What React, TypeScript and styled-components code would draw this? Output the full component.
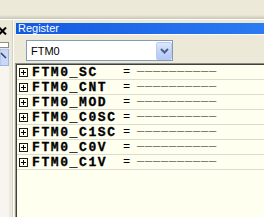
import React from "react";
import styled, {createGlobalStyle} from "styled-components";

const GlobalStyle = createGlobalStyle`
  html, body {
    margin: 0;
    padding: 0;
    background: #ECE9D8;
    overflow: hidden;
  }

  #root {
    width: 264px;
    height: 217px;
    overflow: hidden;
  }
`;

const Screen = styled.div`
  width: 264px;
  height: 217px;
  display: flex;
  flex-direction: column;
  background: #ECE9D8;
  font-family: Tahoma, "Liberation Sans", "DejaVu Sans", sans-serif;
  overflow: hidden;
`;

const TopBar = styled.div`
  flex: none;
  height: 19px;
  background: linear-gradient(to bottom, #ECE9D8 0, #ECE9D8 15px, #E2DECD 16px, #D3CFBE 18px, #C9C5B4 19px);
`;

const Body = styled.div`
  flex: 1;
  display: flex;
  min-height: 0;
  border-top: 1px solid #FFFFFF;
`;

const SideStrip = styled.div`
  flex: none;
  width: 12px;
  display: flex;
  flex-direction: column;
  border-right: 1px solid #D4D0C8;
`;

const CloseGlyph = styled.svg`
  flex: none;
  margin: 7px 0 0 -2px;
  display: block;
`;

const SmallBox = styled.div`
  flex: none;
  width: 8px;
  height: 4px;
  margin-top: 7px;
  background: #FFFFFF;
  border: 1px solid #8E8E88;
  border-left: none;
`;

const ToolIcon = styled.svg`
  flex: none;
  display: block;
  margin-top: 1px;
`;

const SideFill = styled.div`
  flex: 1;
  width: 9px;
  background: #F6F5F0;
  border-right: 3px solid #ECE9D8;
  box-sizing: content-box;
`;

const Panel = styled.div`
  flex: 1;
  display: flex;
  flex-direction: column;
  min-width: 0;
  border-left: 1px solid #FFFFFF;
  padding: 3px 0 0 1px;
`;

const TitleBar = styled.div`
  flex: none;
  height: 11px;
  margin-left: 1px;
  padding-left: 2px;
  display: flex;
  align-items: center;
  color: #FFFFFF;
  font-size: 11px;
  line-height: 11px;
  background: linear-gradient(to right, #1259E2, #2C7BF2);
  border-bottom: 1px solid #FFFFFF;
`;

const ComboRow = styled.div`
  flex: none;
  padding: 5px 0 2px 11px;
`;

const Combo = styled.div`
  width: 145px;
  height: 19px;
  display: flex;
  align-items: center;
  background: #FFFFFF;
  border: 1px solid #7F9DB9;
`;

const ComboText = styled.span`
  flex: 1;
  padding-left: 4px;
  font-size: 11px;
  color: #000000;
`;

const ComboButton = styled.div`
  flex: none;
  width: 16px;
  height: 18px;
  display: flex;
  align-items: center;
  justify-content: center;
  border-radius: 2px;
  border: 1px solid #B9CBF3;
  box-sizing: border-box;
  background: linear-gradient(to bottom, #DDE7FD, #C0D2F9 60%, #B3C8F6);
`;

const List = styled.div`
  flex: 1;
  background: #FFFFF0;
  border-top: 1px solid #8A8A84;
  border-left: 1px solid #9C9A94;
  box-shadow: inset 1px 1px 0 #404040;
  padding: 1px 0 0 1px;
`;

const Row = styled.div`
  height: 14px;
  display: flex;
  align-items: center;
  border-bottom: 1px solid #DCDBCE;
  padding-left: 2px;
`;

const Toggle = styled.svg`
  flex: none;
  display: block;
  margin: 1px 4px 0 0;
`;

const Name = styled.span`
  flex: none;
  width: 91px;
  padding-top: 1px;
  font-family: "Courier New", "Liberation Mono", monospace;
  font-weight: bold;
  font-size: 13px;
  letter-spacing: 1.6px;
  color: #000000;
  white-space: pre;
  -webkit-text-stroke: 0.3px #000000;
`;

const Eq = styled.span`
  flex: none;
  width: 14px;
  font-family: "Liberation Mono", monospace;
  font-size: 12px;
  color: #000000;
`;

const Value = styled.span`
  flex: none;
  font-family: "Liberation Mono", monospace;
  font-size: 12px;
  letter-spacing: 0.8px;
  color: #76766A;
  white-space: pre;
`;

const registers = [
    "FTM0_SC",
    "FTM0_CNT",
    "FTM0_MOD",
    "FTM0_C0SC",
    "FTM0_C1SC",
    "FTM0_C0V",
    "FTM0_C1V",
];

const App = () => {
    return <>
        <GlobalStyle/>
        <Screen>
            <TopBar/>
            <Body>
                <SideStrip>
                    <CloseGlyph width="9" height="8" viewBox="0 0 9 8">
                        <path d="M1 0.5 L8 7.5 M8 0.5 L1 7.5" stroke="#000" strokeWidth="2"/>
                    </CloseGlyph>
                    <SmallBox/>
                    <ToolIcon width="9" height="17" viewBox="0 0 9 17">
                        <rect x="0" y="0" width="9" height="17" fill="#C9D8F6"/>
                        <rect x="0" y="0" width="8.5" height="16.5" fill="none" stroke="#9DB4E4"/>
                        <path d="M1 4 L6 9" stroke="#2E3E66" strokeWidth="1.5"/>
                    </ToolIcon>
                    <SideFill/>
                </SideStrip>
                <Panel>
                    <TitleBar>Register</TitleBar>
                    <ComboRow>
                        <Combo>
                            <ComboText>FTM0</ComboText>
                            <ComboButton>
                                <svg width="9" height="6" viewBox="0 0 9 6">
                                    <path d="M1 1 L4.5 4.5 L8 1" fill="none" stroke="#4D6185" strokeWidth="2"/>
                                </svg>
                            </ComboButton>
                        </Combo>
                    </ComboRow>
                    <List>
                        {
                            registers.map((name) => {
                                return <Row key={name}>
                                    <Toggle width="9" height="9" viewBox="0 0 9 9">
                                        <rect x="0.5" y="0.5" width="8" height="8" fill="none" stroke="#1A1A1A"/>
                                        <path d="M2 4.5 H7 M4.5 2 V7" stroke="#000" strokeWidth="1"/>
                                    </Toggle>
                                    <Name>{name}</Name>
                                    <Eq>=</Eq>
                                    <Value>——————————</Value>
                                </Row>
                            })
                        }
                    </List>
                </Panel>
            </Body>
        </Screen>
    </>
}

export default App;
